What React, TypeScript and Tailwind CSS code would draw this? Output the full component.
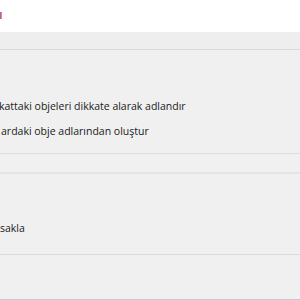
export default function App() {
  return (
    <div
      className="w-[300px] h-[300px] overflow-hidden bg-[#f0f0f0] flex flex-col text-[10.5px] text-[#1a1a1a]"
      style={{ fontFamily: '"Open Sans", "Noto Sans", sans-serif' }}
    >
      <div className="h-[32px] bg-white shrink-0 pt-[6px]">
        <span className="block -ml-[1px] text-[13px] font-semibold text-[#c0487a] leading-[16px]">ı</span>
      </div>
      <div className="h-[17px] bg-[#eeeeee] shrink-0" />
      <div className="h-px bg-[#d9d9d9] shrink-0" />
      <div className="h-[49px] shrink-0" />
      <div className="flex flex-col gap-[10px] leading-[15px]">
        <span className="-ml-[1px] whitespace-nowrap">kattaki objeleri dikkate alarak adlandır</span>
        <span className="ml-px whitespace-nowrap">ardaki obje adlarından oluştur</span>
      </div>
      <div className="h-[14px] shrink-0" />
      <div className="h-px bg-[#dedede] shrink-0" />
      <div className="h-[18px] shrink-0" />
      <div className="h-[2px] bg-[#e4e4e4] shrink-0" />
      <div className="h-[46px] shrink-0" />
      <span className="whitespace-nowrap leading-[16px]">sakla</span>
      <div className="h-[18px] shrink-0" />
      <div className="h-px bg-[#dadada] shrink-0" />
      <div className="h-[44px] shrink-0" />
      <div className="h-px bg-[#c8c8c8] shrink-0" />
      <div className="flex-1 bg-[#dcdcdc] flex">
        <div className="w-[87px]" />
        <div className="w-px bg-[#bdbdbd]" />
        <div className="w-[160px]" />
        <div className="w-px bg-[#9a9a9a]" />
        <div className="w-px" />
        <div className="w-px bg-[#9a9a9a]" />
      </div>
    </div>
  );
}
